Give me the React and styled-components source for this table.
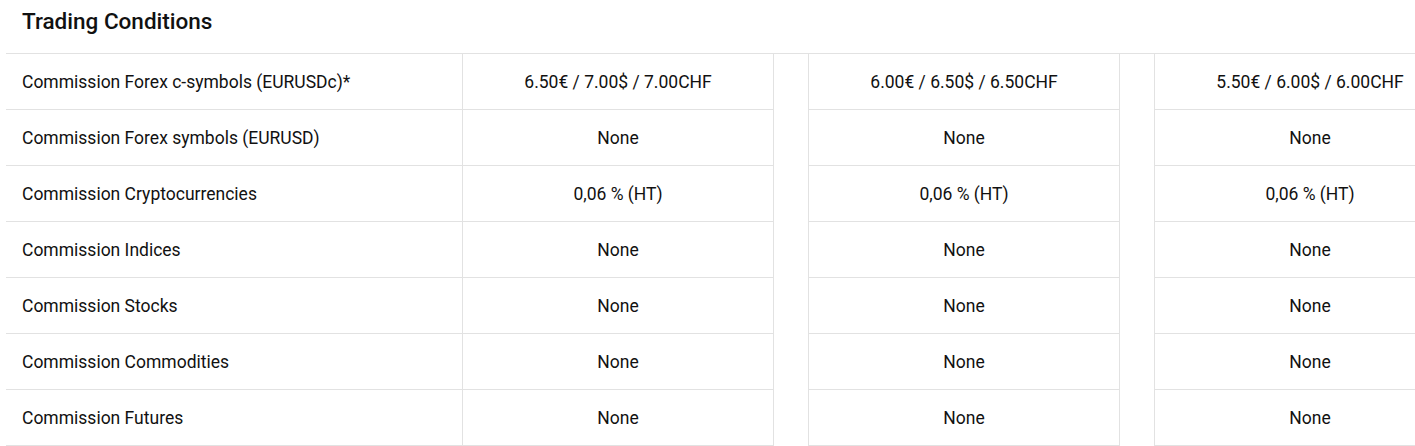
import React from "react";
import styled, { createGlobalStyle } from "styled-components";

const GlobalStyle = createGlobalStyle`
  html, body {
    margin: 0;
    padding: 0;
    background: #ffffff;
    overflow: hidden;
  }
  body {
    font-family: Roboto, "Liberation Sans", Arial, sans-serif;
    color: #111111;
  }
`;

const Wrapper = styled.div`
  padding-left: 6px;
  width: 1460px;
`;

const Title = styled.h2`
  margin: 0;
  box-sizing: border-box;
  height: 54px;
  padding: 8px 0 0 16px;
  font-size: 22.5px;
  line-height: normal;
  font-weight: 500;
  color: #111111;
  border-bottom: 1px solid #e2e2e2;
`;

const Row = styled.div`
  display: grid;
  grid-template-columns: 456px 312px 34px 312px 34px 312px;
  height: 56px;
`;

const Label = styled.div`
  display: flex;
  align-items: center;
  padding-left: 16px;
  font-size: 17.5px;
  border-bottom: 1px solid #e2e2e2;
`;

const Value = styled.div`
  display: flex;
  align-items: center;
  justify-content: center;
  font-size: 17.5px;
  border-left: 1px solid #e2e2e2;
  border-right: 1px solid #e2e2e2;
  border-bottom: 1px solid #e2e2e2;
`;

const Gap = styled.div``;

const rows = [
  {
    label: "Commission Forex c-symbols (EURUSDc)*",
    values: ["6.50€ / 7.00$ / 7.00CHF", "6.00€ / 6.50$ / 6.50CHF", "5.50€ / 6.00$ / 6.00CHF"]
  },
  { label: "Commission Forex symbols (EURUSD)", values: ["None", "None", "None"] },
  { label: "Commission Cryptocurrencies", values: ["0,06 % (HT)", "0,06 % (HT)", "0,06 % (HT)"] },
  { label: "Commission Indices", values: ["None", "None", "None"] },
  { label: "Commission Stocks", values: ["None", "None", "None"] },
  { label: "Commission Commodities", values: ["None", "None", "None"] },
  { label: "Commission Futures", values: ["None", "None", "None"] }
];

export default function App() {
  return (
    <>
      <GlobalStyle />
      <Wrapper>
        <Title>Trading Conditions</Title>
        {rows.map((row) => (
          <Row key={row.label}>
            <Label>{row.label}</Label>
            <Value>{row.values[0]}</Value>
            <Gap />
            <Value>{row.values[1]}</Value>
            <Gap />
            <Value>{row.values[2]}</Value>
          </Row>
        ))}
      </Wrapper>
    </>
  );
}
